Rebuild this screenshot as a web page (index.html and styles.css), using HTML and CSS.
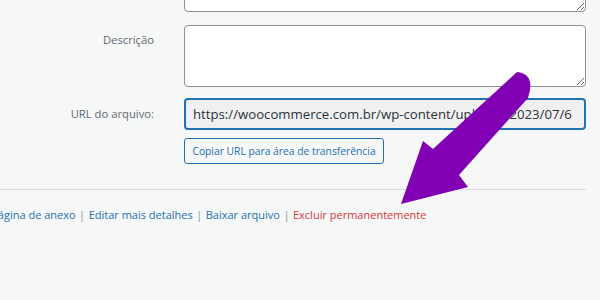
FILE: index.html
```html
<!DOCTYPE html>
<html lang="pt-BR">
<head>
    <meta charset="UTF-8">
    <meta name="viewport" content="width=device-width, initial-scale=1.0">
    <title>Detalhes do anexo</title>
    <link rel="stylesheet" href="styles.css">
</head>
<body>
    <div class="details">
        <div class="field-row first-row">
            <span class="label"></span>
            <div class="field">
                <textarea class="box"></textarea>
            </div>
        </div>

        <div class="field-row desc-row">
            <label class="label">Descrição</label>
            <div class="field">
                <textarea class="box"></textarea>
            </div>
        </div>

        <div class="field-row url-row">
            <label class="label">URL do arquivo:</label>
            <div class="field">
                <input class="url-input" type="text" readonly value="https://woocommerce.com.br/wp-content/uploads/2023/07/6">
                <button class="copy-btn">Copiar URL para área de transferência</button>
            </div>
        </div>
    </div>

    <div class="actions">
        <a href="#">Ver página de anexo</a>
        <span class="sep">|</span>
        <a href="#">Editar mais detalhes</a>
        <span class="sep">|</span>
        <a href="#">Baixar arquivo</a>
        <span class="sep">|</span>
        <a href="#" class="delete">Excluir permanentemente</a>
    </div>

    <svg class="arrow" width="600" height="300" viewBox="0 0 600 300">
        <path d="M401 204 L423 141 L433 149 L517 72 Q536 74 528 98 L459 175 L468 187 Z" fill="#8200b4"/>
    </svg>
</body>
</html>
```

FILE: styles.css
```css
* {
    margin: 0;
    padding: 0;
    box-sizing: border-box;
}

body {
    font-family: "Open Sans", Arial, sans-serif;
    background: #f6f7f7;
    color: #2c3338;
    width: 600px;
    height: 300px;
    overflow: hidden;
    position: relative;
}

.details {
    width: 586px;
    border-bottom: 1px solid #dcdcde;
    padding-bottom: 25px;
}

.field-row {
    display: grid;
    grid-template-columns: 154px 402px;
    column-gap: 30px;
}

.first-row {
    margin-top: -50px;
}

.desc-row {
    margin-top: 13px;
}

.url-row {
    margin-top: 11px;
}

.label {
    text-align: right;
    font-size: 11.25px;
    color: #646970;
    padding-top: 7px;
}

.url-row .label {
    padding-top: 8px;
}

.field {
    display: flex;
    flex-direction: column;
    align-items: flex-start;
}

.box {
    display: block;
    width: 402px;
    height: 62px;
    border: 1px solid #8c8f94;
    border-radius: 4px;
    background: #fff;
    resize: vertical;
}

.url-input {
    width: 402px;
    height: 32px;
    border: 2px solid #2271b1;
    border-radius: 4px;
    background: #f0f0f1;
    font-family: "Open Sans", Arial, sans-serif;
    font-size: 13.2px;
    color: #2c3338;
    padding: 0 7px;
    outline: none;
}

.copy-btn {
    margin-top: 8px;
    width: 200px;
    height: 26px;
    border: 1px solid #2271b1;
    border-radius: 3px;
    background: #f6f7f7;
    color: #2271b1;
    font-family: "Open Sans", Arial, sans-serif;
    font-size: 10.3px;
}

.actions {
    display: flex;
    gap: 3.5px;
    margin-left: -29px;
    padding-top: 17px;
    font-size: 11px;
    white-space: nowrap;
}

.actions a {
    color: #2271b1;
    text-decoration: none;
}

.actions a.delete {
    color: #d63638;
}

.sep {
    color: #8c8f94;
}

.arrow {
    position: absolute;
    top: 0;
    left: 0;
    pointer-events: none;
}
```
